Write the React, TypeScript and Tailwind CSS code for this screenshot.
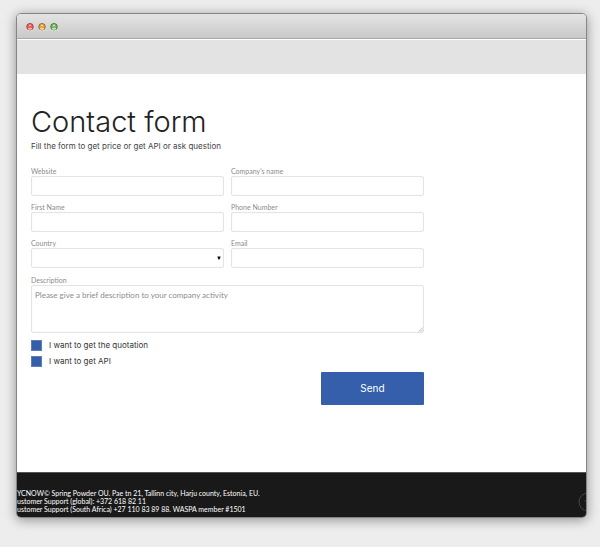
import React from 'react';

interface FieldProps {
  id: string;
  label: string;
  children: React.ReactNode;
}

const inputClass =
  'block h-5 w-full rounded-[2px] border border-[#e4e4e4] bg-white px-1 text-[8px] text-gray-700 shadow-[inset_0_0_1px_#e5e5e5] outline-none focus:border-[#355faa]';

const Field: React.FC<FieldProps> = ({ id, label, children }) => (
  <div>
    <label htmlFor={id} className="block text-[7px] leading-[10px] text-[#8c8c8c]">
      {label}
    </label>
    {children}
  </div>
);

const TextField: React.FC<{ id: string; label: string; type?: string }> = ({ id, label, type = 'text' }) => (
  <Field id={id} label={label}>
    <input id={id} name={id} type={type} className={inputClass} />
  </Field>
);

const CheckOption: React.FC<{ id: string; label: string }> = ({ id, label }) => (
  <div className="flex h-4 items-center gap-[7px]">
    <input
      id={id}
      type="checkbox"
      className="size-[11px] shrink-0 appearance-none border border-[#5b7dbb] bg-[#355faa] checked:bg-[#1f3f7d]"
    />
    <label htmlFor={id} className="font-['Inter',sans-serif] text-[8px] text-[#333]">
      {label}
    </label>
  </div>
);

const lights = [
  { id: 'close', edge: '#8f3f3a', fill: '#ef5b57', glow: '#ffc9c4' },
  { id: 'minimize', edge: '#8a602f', fill: '#e0a243', glow: '#ffe9ac' },
  { id: 'zoom', edge: '#3f7038', fill: '#75b765', glow: '#d0f5c3' },
];

const TitleBar: React.FC = () => (
  <div className="flex h-[25px] items-center gap-1 border-b border-[#a9a9a9] bg-linear-to-b from-[#e4e4e4] to-[#c9c9c9] px-[9px] pt-px">
    {lights.map(light => (
      <svg key={light.id} viewBox="0 0 8 8" className="size-2" aria-hidden="true">
        <circle cx="4" cy="4.4" r="3.6" fill="#f3f3f3" />
        <circle cx="4" cy="3.8" r="3.3" fill={light.fill} stroke={light.edge} strokeWidth="0.9" />
        <ellipse cx="4" cy="2.4" rx="1.3" ry="0.8" fill={light.glow} opacity="0.8" />
        <ellipse cx="4" cy="5.8" rx="2.2" ry="1.1" fill={light.glow} opacity="0.8" />
      </svg>
    ))}
  </div>
);

const ContactForm: React.FC = () => (
  <form className="max-w-[393px]" onSubmit={e => e.preventDefault()}>
    <div className="grid grid-cols-2 gap-x-[7px] gap-y-1.5">
      <TextField id="website" label="Website" />
      <TextField id="company" label="Company's name" />
      <TextField id="firstName" label="First Name" />
      <TextField id="phone" label="Phone Number" type="tel" />
      <Field id="country" label="Country">
        <div className="grid items-center">
          <select id="country" className={`${inputClass} col-start-1 row-start-1 appearance-none`}>
            <option value=""></option>
            <option value="ee">Estonia</option>
            <option value="za">South Africa</option>
          </select>
          <svg
            viewBox="0 0 4 4"
            className="pointer-events-none col-start-1 row-start-1 mr-[3px] size-1 justify-self-end"
            aria-hidden="true"
          >
            <path d="M0.3 0.5h3.4L2.6 3.5H1.4z" fill="#111" />
          </svg>
        </div>
      </Field>
      <TextField id="email" label="Email" type="email" />
    </div>
    <div className="mt-[7px]">
      <Field id="description" label="Description">
        <div className="grid">
          <textarea
            id="description"
            placeholder="Please give a brief description to your company activity"
            className="col-start-1 row-start-1 block h-12 w-full resize-none rounded-[2px] border border-[#e4e4e4] bg-white px-[3px] py-1 text-[8px] leading-[10px] text-gray-700 shadow-[inset_0_0_1px_#e5e5e5] outline-none placeholder:text-[#8c8c8c] focus:border-[#355faa]"
          />
          <svg
            viewBox="0 0 5 5"
            className="pointer-events-none col-start-1 row-start-1 mr-px mb-px size-[5px] self-end justify-self-end"
            stroke="#a5a5a5"
            strokeWidth="0.7"
            aria-hidden="true"
          >
            <path d="M0.5 4.8 4.8 0.5M2.7 4.8 4.8 2.7" />
          </svg>
        </div>
      </Field>
    </div>
    <div className="mt-1">
      <CheckOption id="quotation" label="I want to get the quotation" />
      <CheckOption id="api" label="I want to get API" />
    </div>
    <div className="mt-[3px] flex justify-end">
      <button
        type="submit"
        className="h-[33px] w-[103px] rounded-[1px] bg-[#355faa] font-['Inter',sans-serif] text-[10px] text-white hover:bg-[#2c5196]"
      >
        Send
      </button>
    </div>
  </form>
);

const Footer: React.FC = () => (
  <footer className="flex items-start justify-between overflow-hidden border-t border-[#555] bg-[#191919] pt-4 pb-1 text-[7px] leading-2 whitespace-nowrap text-white">
    <div>
      <p>YCNOW© Spring Powder OU. Pae tn 21, Tallinn city, Harju county, Estonia, EU.</p>
      <p>ustomer Support (global): +372 618 82 11</p>
      <p>ustomer Support (South Africa) +27 110 83 89 88. WASPA member #1501</p>
    </div>
    <svg viewBox="0 0 20 20" className="mt-[3px] -mr-3 size-5 shrink-0" fill="none" stroke="#454545" aria-hidden="true">
      <circle cx="10" cy="10" r="9" />
      <path d="M6.5 9.5 10 6.5l3.5 3" />
    </svg>
  </footer>
);

export default function App() {
  return (
    <div className="min-h-screen bg-[#ededed] px-4 pt-[13px] pb-7 font-['Lato','Noto_Sans',sans-serif]">
      <div className="mr-[-3px] overflow-hidden rounded-[5px] border border-[#858585] bg-white shadow-[0_2px_12px_rgba(0,0,0,0.4)]">
        <TitleBar />
        <div className="mt-px h-[34px] bg-[#e3e3e3]" />
        <main className="px-[14px] pt-[30px] pb-[67px]">
          <h1 className="font-['Inter',sans-serif] text-[29px] leading-9 font-light text-[#222]">Contact form</h1>
          <p className="mt-0.5 mb-4 font-['Inter',sans-serif] text-[8px] leading-2 text-[#444]">
            Fill the form to get price or get API or ask question
          </p>
          <ContactForm />
        </main>
        <Footer />
      </div>
    </div>
  );
}
